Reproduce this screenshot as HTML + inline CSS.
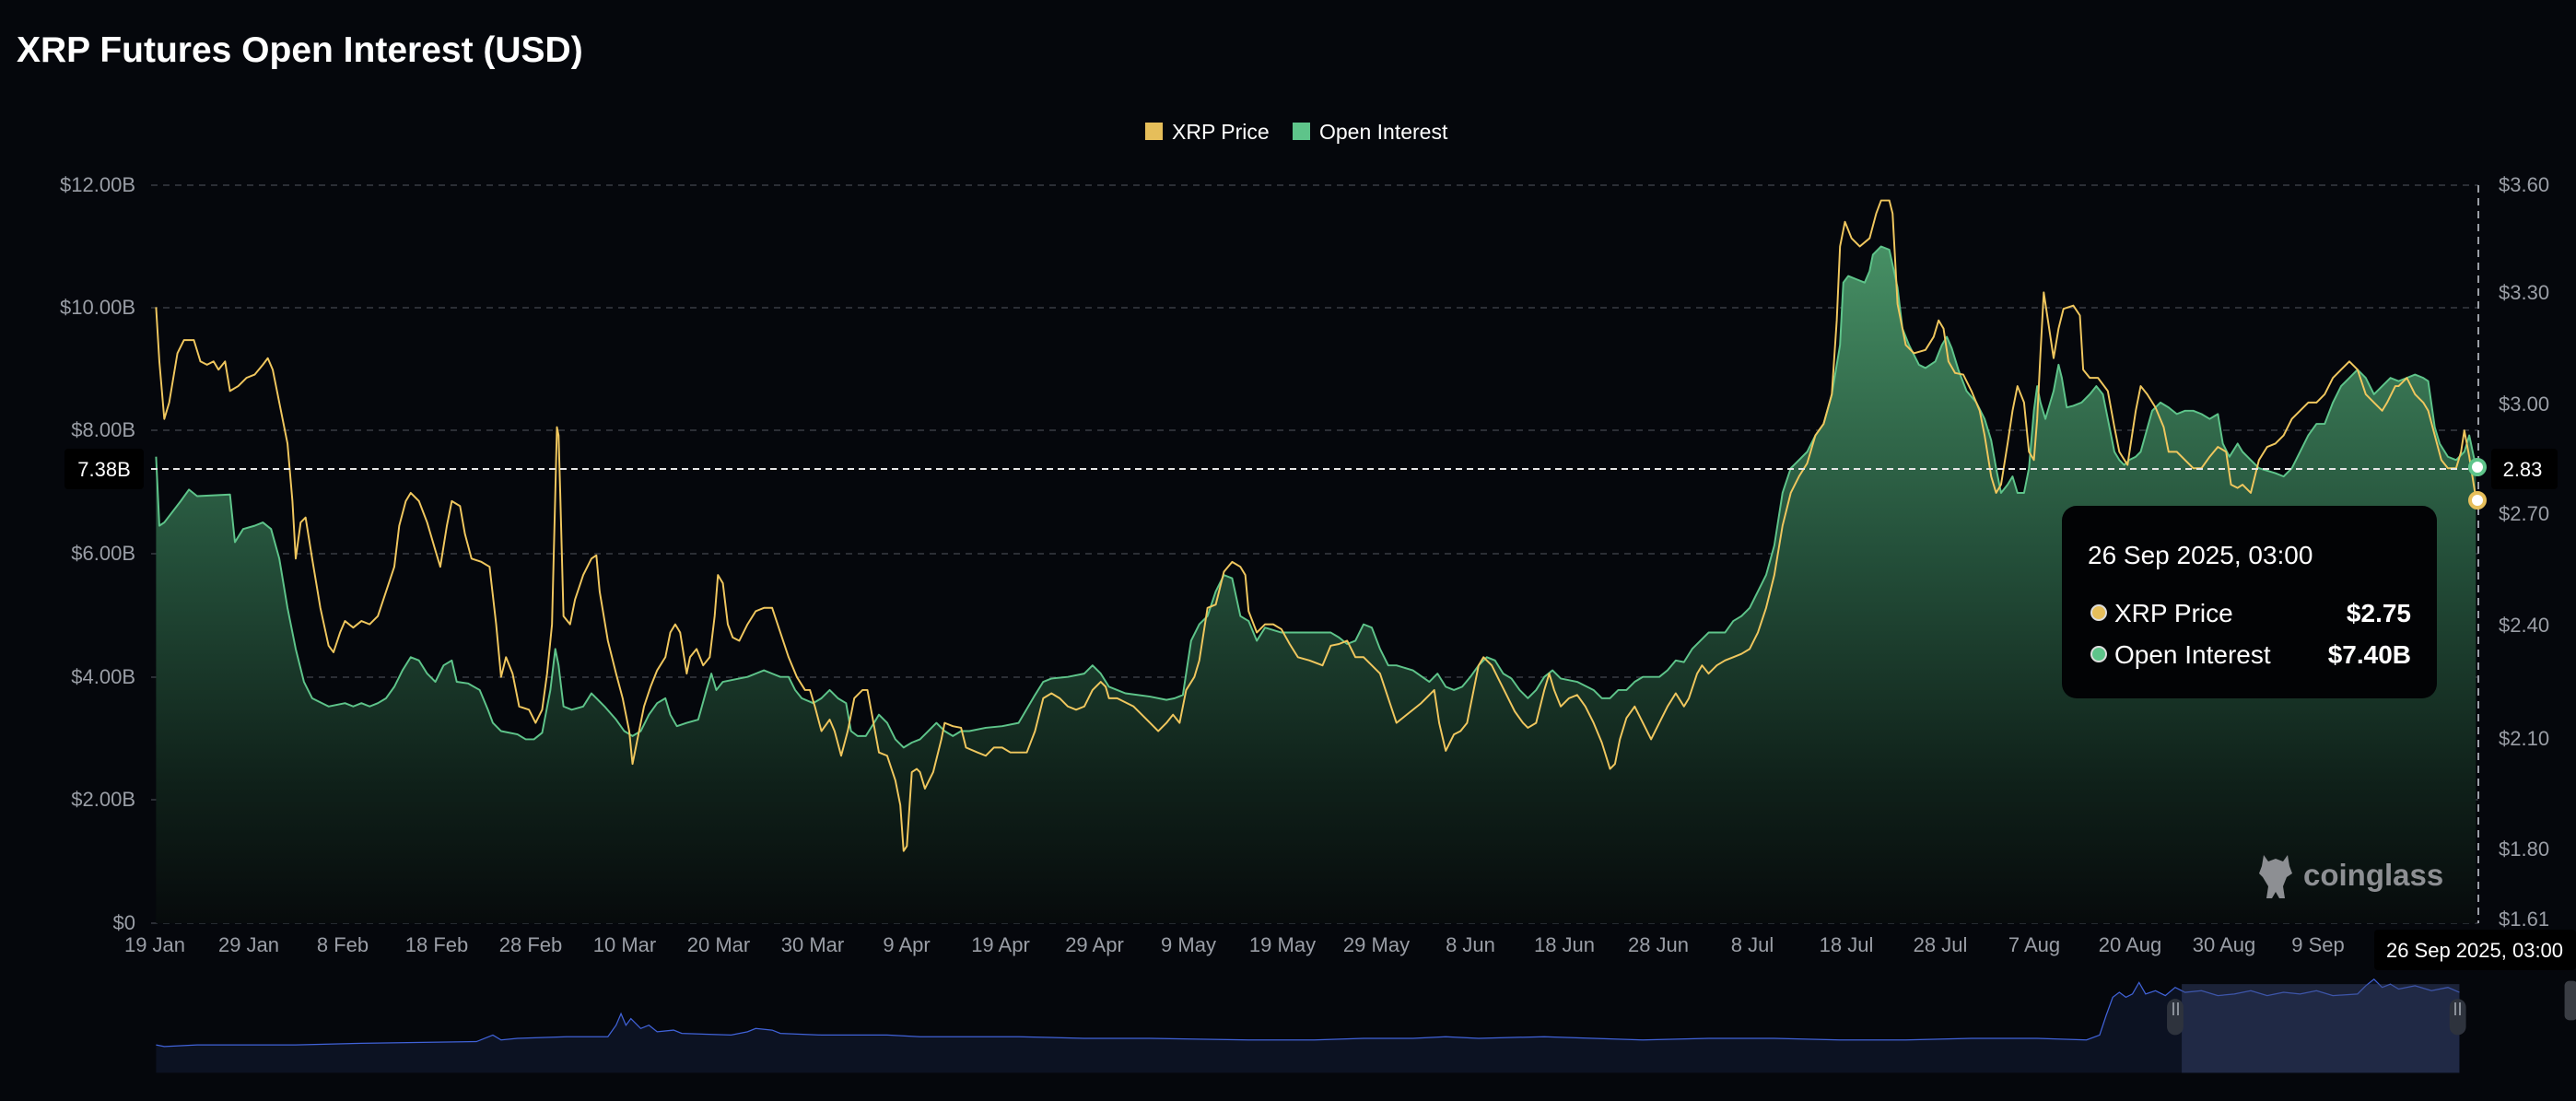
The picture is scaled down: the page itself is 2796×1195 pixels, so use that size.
<!DOCTYPE html>
<html><head><meta charset="utf-8"><style>
html,body{margin:0;padding:0;background:#05070c;}
body{width:2796px;height:1195px;overflow:hidden;position:relative;font-family:"Liberation Sans",sans-serif;}
svg{position:absolute;left:0;top:0;}
</style></head><body>
<svg width="2796" height="1195" viewBox="0 0 2796 1195" xmlns="http://www.w3.org/2000/svg" font-family="Liberation Sans, sans-serif">
<defs>
<linearGradient id="g" gradientUnits="userSpaceOnUse" x1="0" y1="150" x2="0" y2="560">
<stop offset="0" stop-color="#468f64"/>
<stop offset="0.45" stop-color="#24503a"/>
<stop offset="0.8" stop-color="#0f2019"/>
<stop offset="1" stop-color="#070b0c"/>
</linearGradient>
</defs>
<rect width="2796" height="1195" fill="#05070c"/>
<text x="18" y="67" font-size="39" font-weight="bold" fill="#ffffff">XRP Futures Open Interest (USD)</text>
<rect x="1243" y="133" width="19" height="19" fill="#e6be5a"/>
<text x="1272" y="151" font-size="23" fill="#ffffff">XRP Price</text>
<rect x="1403" y="133" width="19" height="19" fill="#5ec48a"/>
<text x="1432" y="151" font-size="23" fill="#ffffff">Open Interest</text>
<g stroke="#2b2e35" stroke-width="2" stroke-dasharray="7,6">
<line x1="164" y1="201" x2="2690" y2="201"/>
<line x1="164" y1="334" x2="2690" y2="334"/>
<line x1="164" y1="467" x2="2690" y2="467"/>
<line x1="164" y1="601" x2="2690" y2="601"/>
<line x1="164" y1="735" x2="2690" y2="735"/>
<line x1="164" y1="868" x2="2690" y2="868"/>
<line x1="164" y1="1002" x2="2690" y2="1002"/>
</g>
<g font-size="22" fill="#9a9ea6" text-anchor="end">
<text x="147" y="208">$12.00B</text>
<text x="147" y="341">$10.00B</text>
<text x="147" y="474">$8.00B</text>
<text x="147" y="608">$6.00B</text>
<text x="147" y="742">$4.00B</text>
<text x="147" y="875">$2.00B</text>
<text x="147" y="1009">$0</text>
</g>
<g font-size="22" fill="#9a9ea6">
<text x="2712" y="208">$3.60</text>
<text x="2712" y="325">$3.30</text>
<text x="2712" y="446">$3.00</text>
<text x="2712" y="565">$2.70</text>
<text x="2712" y="686">$2.40</text>
<text x="2712" y="809">$2.10</text>
<text x="2712" y="929">$1.80</text>
<text x="2712" y="1005">$1.61</text>
</g>
<g transform="scale(1.7832)">
<path fill="url(#g)" d="M95,278 L97,320 100,318 110,305 115,298 120,302 140,301 143,330 148,322 155,320 160,318 165,322 170,340 175,370 180,395 185,415 190,425 200,430 210,428 215,430 220,428 225,430 230,428 235,425 240,418 245,408 250,400 255,402 260,410 265,415 270,405 275,402 278,415 285,416 292,420 297,432 300,440 305,445 315,447 320,450 325,450 330,446 335,420 338,395 340,405 343,430 348,432 355,430 360,422 363,425 368,430 375,438 380,445 385,448 390,445 395,435 400,428 405,425 408,435 412,442 418,440 425,438 430,420 433,410 436,420 440,415 450,413 455,412 460,410 465,408 470,410 475,412 480,412 484,420 488,425 495,428 500,425 505,420 510,425 515,428 518,445 522,448 527,448 532,440 535,435 540,440 545,450 550,455 555,452 560,450 565,445 570,440 575,445 580,448 585,445 590,445 600,443 610,442 620,440 630,423 635,415 640,413 650,412 660,410 665,405 670,410 675,418 680,420 685,422 700,424 710,426 715,425 720,423 725,390 730,380 735,375 740,360 745,350 750,352 755,375 760,378 765,390 770,382 780,385 790,385 800,385 810,385 815,388 820,392 825,390 830,380 835,382 840,395 845,405 850,405 860,408 870,415 875,410 880,418 885,420 890,418 895,412 900,405 905,400 910,402 915,410 920,413 925,420 930,425 935,420 940,412 945,408 950,413 960,415 970,420 975,425 980,425 985,420 990,420 995,415 1000,412 1010,412 1015,408 1020,402 1025,403 1030,395 1035,390 1040,385 1045,385 1050,385 1055,378 1060,375 1065,370 1070,360 1075,350 1080,332 1085,300 1090,285 1095,280 1100,275 1105,265 1110,258 1115,240 1120,210 1122,172 1125,168 1130,170 1135,172 1138,165 1140,155 1145,150 1150,152 1155,175 1158,200 1162,210 1168,222 1172,224 1178,220 1182,210 1185,205 1188,212 1192,225 1197,238 1203,245 1208,255 1212,268 1215,285 1218,300 1222,295 1225,290 1228,300 1232,300 1235,285 1238,250 1240,235 1242,245 1245,255 1250,238 1253,222 1255,230 1258,248 1262,247 1267,245 1272,240 1276,235 1280,240 1283,255 1287,275 1290,280 1293,283 1296,280 1300,278 1303,275 1310,250 1315,245 1320,248 1325,252 1330,250 1335,250 1340,252 1345,255 1350,252 1353,270 1357,278 1362,270 1365,275 1370,280 1375,285 1385,288 1390,290 1395,285 1400,275 1405,265 1410,258 1415,258 1420,245 1425,235 1430,230 1435,225 1440,230 1445,240 1450,235 1455,230 1460,232 1465,230 1470,228 1475,230 1478,232 1482,260 1485,270 1490,278 1495,280 1500,275 1503,265 1507,284 L1507,562 L95,562 Z"/>
<polyline fill="none" stroke="#5ec48a" stroke-width="1.1" stroke-linejoin="round" points="95,278 97,320 100,318 110,305 115,298 120,302 140,301 143,330 148,322 155,320 160,318 165,322 170,340 175,370 180,395 185,415 190,425 200,430 210,428 215,430 220,428 225,430 230,428 235,425 240,418 245,408 250,400 255,402 260,410 265,415 270,405 275,402 278,415 285,416 292,420 297,432 300,440 305,445 315,447 320,450 325,450 330,446 335,420 338,395 340,405 343,430 348,432 355,430 360,422 363,425 368,430 375,438 380,445 385,448 390,445 395,435 400,428 405,425 408,435 412,442 418,440 425,438 430,420 433,410 436,420 440,415 450,413 455,412 460,410 465,408 470,410 475,412 480,412 484,420 488,425 495,428 500,425 505,420 510,425 515,428 518,445 522,448 527,448 532,440 535,435 540,440 545,450 550,455 555,452 560,450 565,445 570,440 575,445 580,448 585,445 590,445 600,443 610,442 620,440 630,423 635,415 640,413 650,412 660,410 665,405 670,410 675,418 680,420 685,422 700,424 710,426 715,425 720,423 725,390 730,380 735,375 740,360 745,350 750,352 755,375 760,378 765,390 770,382 780,385 790,385 800,385 810,385 815,388 820,392 825,390 830,380 835,382 840,395 845,405 850,405 860,408 870,415 875,410 880,418 885,420 890,418 895,412 900,405 905,400 910,402 915,410 920,413 925,420 930,425 935,420 940,412 945,408 950,413 960,415 970,420 975,425 980,425 985,420 990,420 995,415 1000,412 1010,412 1015,408 1020,402 1025,403 1030,395 1035,390 1040,385 1045,385 1050,385 1055,378 1060,375 1065,370 1070,360 1075,350 1080,332 1085,300 1090,285 1095,280 1100,275 1105,265 1110,258 1115,240 1120,210 1122,172 1125,168 1130,170 1135,172 1138,165 1140,155 1145,150 1150,152 1155,175 1158,200 1162,210 1168,222 1172,224 1178,220 1182,210 1185,205 1188,212 1192,225 1197,238 1203,245 1208,255 1212,268 1215,285 1218,300 1222,295 1225,290 1228,300 1232,300 1235,285 1238,250 1240,235 1242,245 1245,255 1250,238 1253,222 1255,230 1258,248 1262,247 1267,245 1272,240 1276,235 1280,240 1283,255 1287,275 1290,280 1293,283 1296,280 1300,278 1303,275 1310,250 1315,245 1320,248 1325,252 1330,250 1335,250 1340,252 1345,255 1350,252 1353,270 1357,278 1362,270 1365,275 1370,280 1375,285 1385,288 1390,290 1395,285 1400,275 1405,265 1410,258 1415,258 1420,245 1425,235 1430,230 1435,225 1440,230 1445,240 1450,235 1455,230 1460,232 1465,230 1470,228 1475,230 1478,232 1482,260 1485,270 1490,278 1495,280 1500,275 1503,265 1507,284"/>
<polyline fill="none" stroke="#f0c75e" stroke-width="1.1" stroke-linejoin="round" points="95,187 97,220 100,255 103,245 108,215 112,207 118,207 122,220 126,222 130,220 133,225 137,220 140,238 145,235 150,230 155,228 160,222 163,218 166,225 170,245 175,270 178,305 180,340 183,318 186,315 190,340 195,370 200,393 203,397 207,385 210,378 215,382 220,378 225,380 230,375 235,360 240,345 243,320 247,305 250,300 255,305 260,318 265,335 268,345 272,320 275,305 280,308 283,325 287,340 293,342 298,345 302,380 305,412 308,400 312,410 316,430 322,432 326,440 330,432 333,410 336,380 338,300 339,260 340,265 341,300 343,375 347,380 350,365 355,350 360,340 363,338 365,360 370,390 375,410 379,425 383,445 385,465 388,450 392,430 396,418 400,408 405,400 408,385 411,380 414,385 418,410 420,400 424,395 428,405 432,400 435,375 437,350 440,355 443,380 446,388 450,390 455,380 460,372 465,370 470,370 475,385 480,400 485,412 490,420 493,420 496,430 500,445 505,438 508,445 512,460 516,445 520,425 525,420 528,420 535,458 540,460 545,475 548,490 550,518 552,515 555,470 558,468 560,470 563,480 568,470 573,450 575,440 580,442 585,443 588,455 595,458 600,460 605,455 610,455 615,458 620,458 625,458 630,445 635,425 640,422 645,425 650,430 655,432 660,430 665,420 670,415 673,418 675,425 680,425 690,430 700,440 705,445 710,440 714,435 718,440 722,420 727,412 730,402 735,370 740,368 745,348 750,342 755,345 758,350 760,372 765,385 770,380 775,380 780,383 785,392 790,400 797,402 805,405 810,393 815,392 820,390 825,400 830,400 835,405 840,410 845,425 850,440 855,436 860,432 865,428 870,423 873,420 876,440 880,457 885,447 889,445 893,440 897,420 900,405 903,400 908,405 913,415 918,425 922,433 927,440 930,443 935,440 940,420 943,410 946,420 950,430 955,425 960,423 965,430 970,440 975,452 980,468 983,465 986,450 990,437 995,430 1000,440 1005,450 1010,440 1015,430 1020,422 1025,430 1028,425 1033,410 1036,405 1040,410 1045,405 1050,402 1055,400 1060,398 1065,395 1070,385 1075,370 1080,350 1085,320 1090,300 1095,290 1100,282 1105,265 1110,258 1115,240 1118,195 1120,150 1123,135 1127,145 1132,150 1138,145 1142,130 1145,122 1150,122 1152,130 1155,185 1160,210 1165,215 1172,213 1177,205 1180,195 1183,200 1186,220 1190,227 1195,228 1200,238 1205,250 1208,265 1212,290 1215,300 1218,295 1222,270 1225,250 1228,235 1232,245 1235,275 1238,280 1240,255 1242,215 1244,178 1247,198 1250,218 1253,200 1256,188 1262,186 1266,192 1268,225 1272,230 1277,230 1283,238 1287,260 1290,275 1295,283 1300,250 1303,235 1307,240 1312,248 1317,260 1320,275 1325,275 1330,280 1335,285 1340,285 1345,278 1350,272 1355,275 1358,295 1362,297 1365,295 1370,300 1375,280 1380,272 1385,270 1390,265 1395,255 1400,250 1405,245 1410,245 1415,240 1420,230 1425,225 1430,220 1435,225 1440,240 1445,245 1450,250 1453,245 1458,235 1460,235 1465,230 1470,240 1475,245 1478,250 1482,265 1486,280 1490,285 1495,285 1498,275 1500,262 1503,278 1507,303"/>
<path fill="#0c1222" d="M95,636 L100,637 120,636 180,636 220,635 290,634 300,630 305,633 315,632 345,631 370,631 375,624 378,617 381,624 384,620 390,626 395,624 400,628 410,627 415,629 445,630 455,628 460,626 470,627 475,629 500,630 540,630 560,631 620,631 660,632 700,632 760,633 800,633 830,632 860,632 880,631 900,632 940,631 1000,633 1040,632 1080,632 1120,633 1160,633 1200,632 1240,632 1270,633 1278,630 1282,618 1286,607 1290,604 1294,607 1298,605 1302,598 1306,605 1312,603 1318,606 1324,601 1330,604 1340,603 1350,606 1360,605 1370,603 1380,606 1390,604 1400,605 1410,603 1420,606 1435,605 1440,600 1445,596 1450,601 1455,599 1460,602 1470,600 1480,603 1490,601 1497,604 L1497,653 L95,653 Z"/>
<polyline fill="none" stroke="#4062d8" stroke-width="0.7" points="95,636 100,637 120,636 180,636 220,635 290,634 300,630 305,633 315,632 345,631 370,631 375,624 378,617 381,624 384,620 390,626 395,624 400,628 410,627 415,629 445,630 455,628 460,626 470,627 475,629 500,630 540,630 560,631 620,631 660,632 700,632 760,633 800,633 830,632 860,632 880,631 900,632 940,631 1000,633 1040,632 1080,632 1120,633 1160,633 1200,632 1240,632 1270,633 1278,630 1282,618 1286,607 1290,604 1294,607 1298,605 1302,598 1306,605 1312,603 1318,606 1324,601 1330,604 1340,603 1350,606 1360,605 1370,603 1380,606 1390,604 1400,605 1410,603 1420,606 1435,605 1440,600 1445,596 1450,601 1455,599 1460,602 1470,600 1480,603 1490,601 1497,604"/>
<rect x="1328" y="599" width="169" height="54" fill="#3a4670" opacity="0.45"/>
<rect x="1319" y="608" width="10" height="22" rx="5" fill="#2e333d"/>
<rect x="1491" y="608" width="10" height="22" rx="5" fill="#2e333d"/>
<rect x="1561" y="597" width="8" height="24" rx="3" fill="#3a3d44"/>
</g>
<g stroke="#8a9099" stroke-width="2">
<line x1="2359" y1="1088" x2="2359" y2="1102"/><line x1="2364" y1="1088" x2="2364" y2="1102"/>
<line x1="2665" y1="1088" x2="2665" y2="1102"/><line x1="2670" y1="1088" x2="2670" y2="1102"/>
</g>
<line x1="164" y1="509" x2="2690" y2="509" stroke="#e6e6e6" stroke-width="2" stroke-dasharray="7,5"/>
<line x1="2690" y1="201" x2="2690" y2="1002" stroke="#9a9ea6" stroke-width="2" stroke-dasharray="8,6"/>
<rect x="70" y="487" width="86" height="44" rx="4" fill="#000"/>
<text x="113" y="517" font-size="22" fill="#fff" text-anchor="middle">7.38B</text>
<rect x="2704" y="487" width="72" height="44" rx="4" fill="#000"/>
<text x="2738" y="517" font-size="22" fill="#fff" text-anchor="middle">2.83</text>
<circle cx="2689" cy="507" r="8" fill="#ffffff" stroke="#5ec48a" stroke-width="4"/>
<circle cx="2689" cy="543" r="8" fill="#ffffff" stroke="#e6be5a" stroke-width="4"/>
<g font-size="22" fill="#9a9ea6" text-anchor="middle">
<text x="168" y="1033">19 Jan</text><text x="270" y="1033">29 Jan</text><text x="372" y="1033">8 Feb</text><text x="474" y="1033">18 Feb</text><text x="576" y="1033">28 Feb</text><text x="678" y="1033">10 Mar</text><text x="780" y="1033">20 Mar</text><text x="882" y="1033">30 Mar</text><text x="984" y="1033">9 Apr</text><text x="1086" y="1033">19 Apr</text><text x="1188" y="1033">29 Apr</text><text x="1290" y="1033">9 May</text><text x="1392" y="1033">19 May</text><text x="1494" y="1033">29 May</text><text x="1596" y="1033">8 Jun</text><text x="1698" y="1033">18 Jun</text><text x="1800" y="1033">28 Jun</text><text x="1902" y="1033">8 Jul</text><text x="2004" y="1033">18 Jul</text><text x="2106" y="1033">28 Jul</text><text x="2208" y="1033">7 Aug</text><text x="2312" y="1033">20 Aug</text><text x="2414" y="1033">30 Aug</text><text x="2516" y="1033">9 Sep</text>
</g>
<rect x="2577" y="1009" width="219" height="44" rx="4" fill="#000"/>
<text x="2686" y="1039" font-size="22" fill="#fff" text-anchor="middle">26 Sep 2025, 03:00</text>
<rect x="2238" y="549" width="407" height="209" rx="16" fill="#020305"/>
<text x="2266" y="612" font-size="28" fill="#fff">26 Sep 2025, 03:00</text>
<circle cx="2278" cy="665" r="8" fill="#e6be5a" stroke="#ddd" stroke-width="2"/>
<text x="2295" y="675" font-size="28" fill="#fff">XRP Price</text>
<text x="2617" y="675" font-size="28" font-weight="bold" fill="#fff" text-anchor="end">$2.75</text>
<circle cx="2278" cy="710" r="8" fill="#5ec48a" stroke="#ddd" stroke-width="2"/>
<text x="2295" y="720" font-size="28" fill="#fff">Open Interest</text>
<text x="2617" y="720" font-size="28" font-weight="bold" fill="#fff" text-anchor="end">$7.40B</text>
<g fill="#8d8f93">
<path d="M2457,928 L2462,935 2470,932 2478,935 2483,928 2485,940 2488,948 2482,952 2478,962 2480,975 2474,975 2470,968 2466,975 2460,975 2462,962 2456,952 2452,948 2455,940 Z"/>
</g>
<text x="2500" y="961" font-size="33" font-weight="bold" fill="#8d8f93">coinglass</text>
</svg>
</body></html>
